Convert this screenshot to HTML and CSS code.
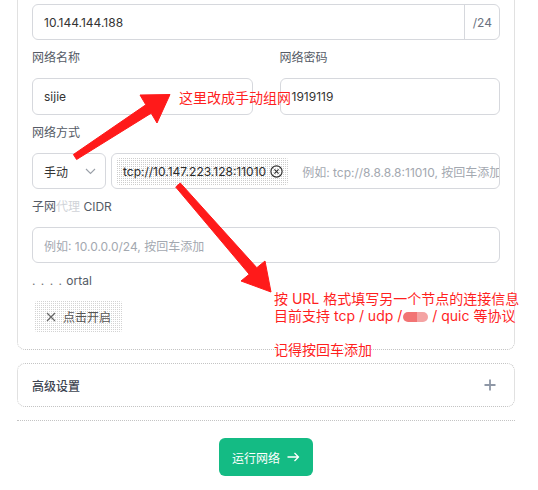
FILE: index.html
```html
<!DOCTYPE html>
<html lang="zh-CN">
<head>
<meta charset="utf-8">
<title>网络配置</title>
<link rel="stylesheet" href="styles.css">
</head>
<body>
<div class="page">
  <section class="card">
    <div class="input-group">
      <span class="input-value">10.144.144.188</span>
      <span class="addon">/24</span>
    </div>

    <div class="row-2">
      <div class="field">
        <div class="label">网络名称</div>
        <div class="input"><span class="input-value">sijie</span></div>
      </div>
      <div class="field">
        <div class="label">网络密码</div>
        <div class="input"><span class="input-value">1919119</span></div>
      </div>
    </div>

    <div class="field">
      <div class="label">网络方式</div>
      <div class="mode-row">
        <div class="select">
          <span class="input-value">手动</span>
          <svg class="chevron" width="11" height="7" viewBox="0 0 11 7"><path d="M1 1l4.5 4.5L10 1" fill="none" stroke="#9aa0a8" stroke-width="1.1"/></svg>
        </div>
        <div class="tags-input">
          <span class="chip">tcp://10.147.223.128:11010
            <svg class="chip-close" width="13" height="13" viewBox="0 0 13 13"><circle cx="6.5" cy="6.5" r="5.6" fill="none" stroke="#333" stroke-width="1.2"/><path d="M4.4 4.4l4.2 4.2M8.6 4.4l-4.2 4.2" stroke="#333" stroke-width="1.2"/></svg>
          </span>
          <span class="placeholder">例如: tcp://8.8.8.8:11010, 按回车添加</span>
        </div>
      </div>
    </div>

    <div class="field">
      <div class="label">子网<span class="faint">代理</span> CIDR</div>
      <div class="input"><span class="placeholder">例如: 10.0.0.0/24, 按回车添加</span></div>
    </div>

    <div class="field">
      <div class="label"><span class="dots">. . . .</span> ortal</div>
      <button class="toggle" type="button">
        <svg width="10" height="10" viewBox="0 0 10 10"><path d="M1 1l8 8M9 1l-8 8" stroke="#666" stroke-width="1.2"/></svg>
        点击开启
      </button>
    </div>
  </section>

  <section class="card adv">
    <span class="adv-title">高级设置</span>
    <svg class="plus" width="12" height="12" viewBox="0 0 12 12"><path d="M6 0.5v11M0.5 6h11" stroke="#8e97a6" stroke-width="1.8"/></svg>
  </section>

  <div class="divider"></div>

  <div class="actions">
    <button class="run" type="button">运行网络
      <svg width="13" height="10" viewBox="0 0 13 10"><path d="M0.5 5h11M7.5 1l4 4-4 4" fill="none" stroke="#fff" stroke-width="1.3"/></svg>
    </button>
  </div>

  <svg class="arrows" width="538" height="490" viewBox="0 0 538 490">
    <polygon fill="#ff1a1a" stroke="#ff1a1a" stroke-width="1" stroke-linejoin="round" points="73.4,154.5 145.8,104.8 140,95 170,94.5 157,123 151.2,113.2 76.6,159.5"/>
    <polygon fill="#ff1a1a" stroke="#ff1a1a" stroke-width="1" stroke-linejoin="round" points="180.3,183 256.8,267.7 265,261 271,292 241,281 249.2,274.3 175.7,187"/>
  </svg>
  <div class="note note-1">这里改成手动组网</div>
  <div class="note note-2">按 URL 格式填写另一个节点的连接信息<br>目前支持 tcp / udp /<span class="redact"></span> / quic 等协议<br><br>记得按回车添加</div>
</div>
</body>
</html>
```

FILE: styles.css
```css
* { box-sizing: border-box; }

html, body {
  margin: 0;
  padding: 0;
  background: #fff;
}

body {
  font-family: Inter, "Noto Sans CJK SC", sans-serif;
  font-size: 12px;
  color: #333;
  overflow: hidden;
  height: 490px;
}

.page {
  position: relative;
  display: flow-root;
  width: 538px;
  height: 490px;
  padding: 0 23px 0 17px;
}

.card {
  border: 1px dotted #c4c4c4;
  border-radius: 8px;
}

.card:first-child {
  margin-top: -14px;
  padding: 17px 14px 17px;
}

.input-group,
.input,
.select,
.tags-input {
  display: flex;
  align-items: center;
  height: 36px;
  border: 1px solid #d6d8dd;
  border-radius: 6px;
  background: #fff;
}

.row-2 .input { height: 37px; }

.input-value {
  padding: 0 11px;
  color: #333;
}

.input-group .input-value { flex: 1; }

.addon {
  align-self: stretch;
  display: flex;
  align-items: center;
  padding: 0 7px 0 8px;
  border-left: 1px solid #d6d8dd;
  color: #6b7280;
}

.field { margin-top: 8px; }

.label {
  line-height: 20px;
  color: #555b66;
  margin-bottom: 10px;
}

.faint { color: #d0d3d8; }

.dots {
  color: #777;
  letter-spacing: 1px;
}

.row-2 {
  display: grid;
  grid-template-columns: 1fr 1fr;
  column-gap: 27px;
}

.mode-row {
  display: flex;
  gap: 5px;
}

.select {
  width: 74px;
  flex: none;
  justify-content: space-between;
  padding-right: 9px;
}

.tags-input {
  flex: 1;
  min-width: 0;
  padding: 0 4px;
  overflow: hidden;
}

.chip {
  flex: none;
  display: inline-flex;
  align-items: center;
  gap: 4px;
  height: 27px;
  padding: 0 6px 0 7px;
  border-radius: 4px;
  color: #2b2b2b;
  background: repeating-conic-gradient(#cdcdcd 0 25%, transparent 0 100%) 0 0 / 2px 2px;
}

.chip-close { flex: none; }

.placeholder {
  color: #a3a8b0;
  white-space: nowrap;
  padding: 0 11px;
}

.tags-input .placeholder { padding: 0 0 0 13px; }

.toggle {
  display: inline-flex;
  align-items: center;
  gap: 7px;
  height: 31px;
  margin-left: 2px;
  padding: 0 12px;
  border: none;
  border-radius: 4px;
  font: inherit;
  color: #555;
  background: repeating-conic-gradient(#d3d3d3 0 25%, transparent 0 100%) 0 0 / 2px 2px;
}

.adv {
  margin-top: 13px;
  height: 44px;
  padding: 0 18px 0 14px;
  display: flex;
  align-items: center;
  justify-content: space-between;
}

.adv-title {
  color: #3d4451;
  font-weight: 500;
}

.divider {
  margin-top: 13px;
  border-top: 1px dotted #c4c4c4;
}

.actions {
  display: flex;
  justify-content: center;
  margin-top: 17px;
}

.run {
  display: inline-flex;
  align-items: center;
  gap: 7px;
  height: 38px;
  padding: 0 13px;
  border: none;
  border-radius: 6px;
  font: inherit;
  color: #fff;
  background: #14bb84;
}

.arrows {
  position: absolute;
  left: 0;
  top: 0;
  pointer-events: none;
}

.note {
  position: absolute;
  color: #ff1f1f;
  font-size: 14px;
  line-height: 17px;
  white-space: nowrap;
}

.note-1 { left: 179px; top: 89px; }

.note-2 { left: 274px; top: 290px; }

.redact {
  display: inline-block;
  width: 25px;
  height: 10px;
  margin-left: 1px;
  vertical-align: -1px;
  border-radius: 5px;
  background: linear-gradient(90deg, #f27474 55%, #f4a3a3 55%);
}
```
